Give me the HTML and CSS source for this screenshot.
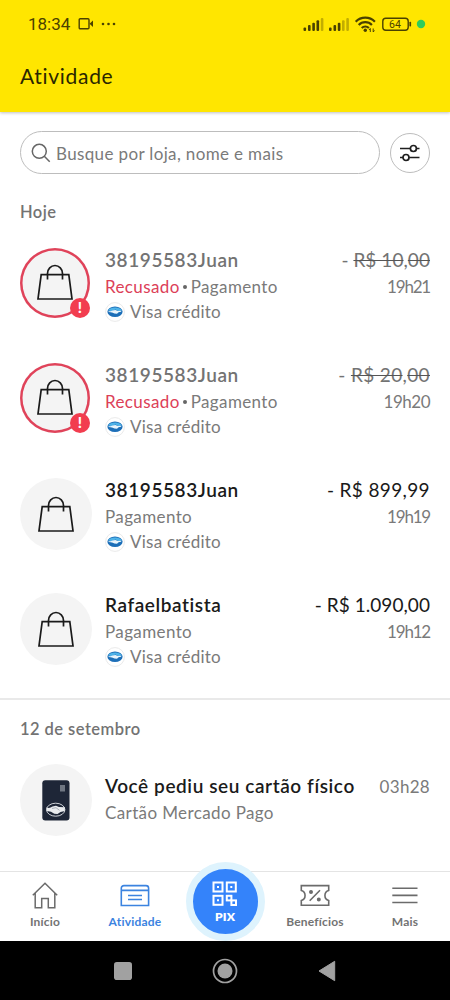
FILE: index.html
```html
<!DOCTYPE html>
<html lang="pt-BR">
<head>
<meta charset="utf-8">
<meta name="viewport" content="width=device-width, initial-scale=1">
<title>Atividade</title>
<link rel="stylesheet" href="styles.css">
</head>
<body>
<svg class="defs" width="0" height="0" aria-hidden="true">
  <symbol id="bag" viewBox="0 0 38 40">
    <path d="M5.2 12.6H32.800L36 37H2Z M11.500 17.500V11.500a7.500 8 0 0 1 15 0V17.500" fill="none" stroke="#1a1a1a" stroke-width="1.700"/>
  </symbol>
  <symbol id="handshake" viewBox="0 0 20 20">
    <circle cx="10" cy="10" r="9.400" fill="#fff" stroke="#e3e3e3" stroke-width=".8"/>
    <ellipse cx="10" cy="9.700" rx="7.600" ry="5.200" fill="#1d6fb8"/>
    <path d="M3.200 8.200C5 5 14.500 4.500 16.800 8.200L14 9.200 10.500 7.600 6.500 9.200Z" fill="#4fb3e8"/>
    <path d="M3.400 8.800C5 9.700 6 9.400 7.500 8.500L10.300 7.900 13 9 16.600 8.700 16 9.700 13.600 10.300 12 11.700 9.500 11.600 7 10.500 3.800 10Z" fill="#e9f5fc"/>
  </symbol>
</svg>
<header class="header">
  <div class="status">
    <span class="clock">18:34</span>
    <svg class="camera" width="16" height="14" viewBox="0 0 16 14"><rect x="1.200" y="1.700" width="9.800" height="10" rx="1" fill="none" stroke="#4a4100" stroke-width="1.400"/><path d="M11.500 6.700 15 3.500V10Z" fill="#4a4100"/></svg>
    <svg class="dots" width="16" height="4" viewBox="0 0 16 4" fill="#4a4100"><circle cx="2" cy="2" r="1.300"/><circle cx="7.500" cy="2" r="1.300"/><circle cx="13" cy="2" r="1.300"/></svg>
    <svg class="signals" width="126" height="20" viewBox="302 14 126 20">
      <g fill="#4a4100"><rect x="303.500" y="27.500" width="2.600" height="3.500" rx="1"/><rect x="308" y="25" width="2.600" height="6" rx="1"/><rect x="312.300" y="22.700" width="2.600" height="8.300" rx="1"/><rect x="316.500" y="20.300" width="2.600" height="10.700" rx="1"/>
      <rect x="329" y="27.500" width="2.600" height="3.500" rx="1"/><rect x="333.500" y="25" width="2.600" height="6" rx="1"/><rect x="337.800" y="22.700" width="2.600" height="8.300" rx="1"/></g>
      <g fill="#c2ad00"><rect x="320.800" y="18" width="2.600" height="13" rx="1"/><rect x="342" y="20.300" width="2.600" height="10.700" rx="1"/><rect x="346.300" y="18" width="2.600" height="13" rx="1"/></g>
      <g fill="none" stroke="#4a4100" stroke-width="2.200"><path d="M355.700 21.700a13.500 13.500 0 0 1 19.200 0M358.700 24.900a9.200 9.200 0 0 1 13.200 0M361.700 28a5.200 5.200 0 0 1 7.200 0"/></g>
      <circle cx="365.300" cy="30.200" r="1.700" fill="#4a4100"/>
      <path d="M370.300 28.500v3.500M369 30l1.300-1.500M373.200 28.500v3.500M373.200 32l1.300-1.500" stroke="#4a4100" stroke-width="1" fill="none"/>
      <rect x="382.800" y="18.200" width="25.400" height="12" rx="3" fill="none" stroke="#4a4100" stroke-width="1.400"/>
      <rect x="409.400" y="21.700" width="1.700" height="4.800" rx=".7" fill="#4a4100"/>
      <text class="battery" x="395" y="28" text-anchor="middle" textLength="12">64</text>
      <circle cx="421" cy="24" r="4.200" fill="#2ecc5a"/>
    </svg>
  </div>
  <h1 class="title">Atividade</h1>
</header>
<main class="content">
  <div class="search-row">
    <div class="search">
      <svg width="20" height="20" viewBox="0 0 20 20" fill="none" stroke="#666" stroke-width="1.500"><circle cx="8.300" cy="8.300" r="7"/><path d="M13.300 13.300 18.700 18.700"/></svg>
      <span class="placeholder">Busque por loja, nome e mais</span>
    </div>
    <div class="filter">
      <svg width="20" height="18" viewBox="0 0 20 18" fill="none" stroke="#1f1f1f" stroke-width="1.700"><path d="M0 4.500H10.300M16.500 4.500H19.500M0 13.500H3M9.200 13.500H19.500"/><circle cx="13.400" cy="4.500" r="3"/><circle cx="6" cy="13.500" r="3"/></svg>
    </div>
  </div>
  <h2 class="day">Hoje</h2>
  <section class="list">
    <article class="item refused">
      <div class="avatar"><svg class="bag"><use href="#bag"/></svg><span class="alert">!</span></div>
      <div class="info">
        <div class="name">38195583Juan</div>
        <div class="kind"><span class="red">Recusado</span><span class="dot"></span>Pagamento</div>
        <div class="method"><svg width="20" height="20"><use href="#handshake"/></svg>Visa crédito</div>
      </div>
      <div class="right"><div class="amount tight">- <s>R$ 10</s>,<s>00</s></div><div class="time ones">19h21</div></div>
    </article>
    <article class="item refused">
      <div class="avatar"><svg class="bag"><use href="#bag"/></svg><span class="alert">!</span></div>
      <div class="info">
        <div class="name">38195583Juan</div>
        <div class="kind"><span class="red">Recusado</span><span class="dot"></span>Pagamento</div>
        <div class="method"><svg width="20" height="20"><use href="#handshake"/></svg>Visa crédito</div>
      </div>
      <div class="right"><div class="amount">- <s>R$ 20</s>,<s>00</s></div><div class="time">19h20</div></div>
    </article>
    <article class="item">
      <div class="avatar"><svg class="bag"><use href="#bag"/></svg></div>
      <div class="info">
        <div class="name">38195583Juan</div>
        <div class="kind">Pagamento</div>
        <div class="method"><svg width="20" height="20"><use href="#handshake"/></svg>Visa crédito</div>
      </div>
      <div class="right"><div class="amount">- R$ 899,99</div><div class="time ones">19h19</div></div>
    </article>
    <article class="item">
      <div class="avatar"><svg class="bag"><use href="#bag"/></svg></div>
      <div class="info">
        <div class="name">Rafaelbatista</div>
        <div class="kind">Pagamento</div>
        <div class="method"><svg width="20" height="20"><use href="#handshake"/></svg>Visa crédito</div>
      </div>
      <div class="right"><div class="amount tight">- R$ 1.090,00</div><div class="time ones">19h12</div></div>
    </article>
  </section>
  <hr class="divider">
  <h2 class="day date">12 de setembro</h2>
  <article class="item card-item">
    <div class="avatar">
      <svg width="28" height="41" viewBox="0 0 28 41"><rect x=".3" y=".3" width="27.200" height="40.300" rx="3" fill="#1e2637"/><rect x="18" y="5" width="5" height="6.500" fill="#6f7682"/><ellipse cx="13.700" cy="29.700" rx="9.200" ry="6.500" fill="#1e2637" stroke="#dfe2e6" stroke-width=".9"/><path d="M4.600 27.500C7 28.300 8.500 27.800 10.500 26.600L14 25.800 17 27 22.900 27.200 22.800 31 18.500 32 15.500 34 12.300 33.800 9 31.800 4.700 31Z" fill="#e9ebee"/><path d="M10 28.500l4-.8 3.500 2.600" stroke="#8d949f" stroke-width=".7" fill="none"/></svg>
    </div>
    <div class="info"><div class="name">Você pediu seu cartão físico</div><div class="kind">Cartão Mercado Pago</div></div>
    <div class="right"><div class="time wide">03h28</div></div>
  </article>
</main>
<nav class="tabs">
  <a class="tab"><svg width="28" height="28" viewBox="0 0 28 28" fill="none" stroke="#6b6b6b" stroke-width="1.500"><path d="M1.800 14.300 14 2.200 26.200 14.300M4.200 12V26.800H10.700V17.500H17.300V26.800H23.800V12"/></svg><span>Início</span></a>
  <a class="tab active"><svg width="30" height="28" viewBox="0 0 30 28" fill="none" stroke="#3b83e0" stroke-width="1.600"><path d="M1.300 24.500V7.200a2.600 2.600 0 0 1 2.600-2.600H26a2.600 2.600 0 0 1 2.600 2.600V24.500ZM1.300 9.400H28.600M8 14.500H22M8 18.500H22"/></svg><span>Atividade</span></a>
  <a class="tab pix">
    <span class="pix-btn">
      <svg width="26" height="26" viewBox="0 0 26 26" fill="none" stroke="#fff" stroke-width="2"><rect x="1.500" y="1.500" width="9" height="9"/><rect x="14.800" y="1.500" width="9" height="9"/><rect x="1.500" y="14.800" width="9" height="9"/><rect x="14.800" y="14.800" width="4.600" height="4.600"/><rect x="19.400" y="19.400" width="4.600" height="4.600"/><path d="M5 6h2M18.300 6h2M5 19.300h2"/></svg>
      <span class="lb-pix">PIX</span>
    </span>
  </a>
  <a class="tab"><svg width="30" height="28" viewBox="0 0 30 28" fill="none" stroke="#6b6b6b" stroke-width="1.600"><path d="M1.300 4.600H28.700V9.500a5.200 5.200 0 0 0 0 10V24.300H1.300V19.500a5.200 5.200 0 0 0 0-10ZM9.700 19.800 20 9.300"/><circle cx="11" cy="11" r="1.200" fill="#6b6b6b"/><circle cx="18.800" cy="18.400" r="1.200" fill="#6b6b6b"/></svg><span>Benefícios</span></a>
  <a class="tab"><svg width="26" height="28" viewBox="0 0 26 28" stroke="#6b6b6b" stroke-width="1.600"><path d="M.3 7.300H25.500M.3 14.400H25.500M.3 21.500H25.500"/></svg><span>Mais</span></a>
</nav>
<footer class="system">
  <svg width="18" height="20" viewBox="0 0 18 20"><rect y="1" width="18" height="18" rx="2.800" fill="#a1a1a1"/></svg>
  <svg width="26" height="26" viewBox="0 0 26 26"><circle cx="13" cy="13" r="11.500" fill="none" stroke="#a1a1a1" stroke-width="1.700"/><circle cx="13" cy="13" r="7.500" fill="#a1a1a1"/></svg>
  <svg width="18" height="22" viewBox="0 0 18 22"><path d="M1 11 16.700 1.300V20.700Z" fill="#a1a1a1" stroke="#a1a1a1" stroke-linejoin="round"/></svg>
</footer>
</body>
</html>
```

FILE: styles.css
```css
* { box-sizing: border-box; }
body { margin: 0; width: 450px; height: 1000px; overflow: hidden; display: flex; flex-direction: column; background: #fff; color: #1a1a1a; font-family: Lato, "Open Sans", sans-serif; font-variant-ligatures: none; }
.defs { display: none; }
.header { flex: none; height: 112px; background: #ffe600; box-shadow: 0 1px 3px rgba(0,0,0,.25); }
.status { display: flex; align-items: center; height: 48px; padding: 0 23px 0 28px; }
.clock { font: 400 17px/20px Roboto, sans-serif; color: #4a4100; width: 50px; }
.camera { margin-right: 7px; }
.signals { margin-left: auto; margin-right: -1px; }
.battery { font: 400 10.500px Roboto, sans-serif; fill: #4a4100; }
.title { margin: 14px 0 0 20px; font-size: 21px; line-height: 28px; font-weight: 400; letter-spacing: .7px; color: #2a2600; }
.content { flex: none; height: 759px; }
.search-row { display: flex; align-items: center; gap: 10px; padding: 19px 20px 0; }
.search { display: flex; align-items: center; width: 360px; height: 43px; padding-left: 10px; border: 1px solid #bdbdbd; border-radius: 22px; }
.placeholder { margin: 1px 0 0 5px; font-size: 17px; letter-spacing: .36px; color: #7a7a7a; white-space: nowrap; }
.filter { display: flex; align-items: center; justify-content: center; width: 40px; height: 40px; border: 1px solid #bdbdbd; border-radius: 50%; }
.day { margin: 26px 20px 0; height: 24px; font-size: 16.500px; line-height: 24px; font-weight: 600; letter-spacing: .45px; color: #737373; }
.list { padding-top: 23px; }
.item { display: flex; height: 115px; padding: 0 20px; }
.avatar { position: relative; flex: none; display: flex; align-items: center; justify-content: center; width: 72px; height: 72px; margin-top: 1px; border-radius: 50%; background: #f4f4f4; }
.bag { width: 38px; height: 40px; }
.refused .avatar { width: 70px; height: 70px; margin-right: 2px; box-shadow: inset 0 0 0 2.500px #e0435a; }
.refused .bag { margin-top: -2px; }
.alert { position: absolute; right: 0; bottom: 0; width: 20px; height: 20px; border-radius: 50%; background: #f23d4f; color: #fff; font-size: 15px; line-height: 19px; font-weight: 900; text-align: center; }
.info { flex: 1; margin-left: 13px; white-space: nowrap; }
.name { font-size: 19px; line-height: 25px; font-weight: 600; letter-spacing: .58px; }
.kind { display: flex; align-items: center; height: 27px; padding-top: 2px; font-size: 17px; line-height: 25px; letter-spacing: .38px; color: #7a7a7a; }
.red { color: #dc4058; }
.dot { width: 4px; height: 4px; margin: 1px 4px 0 3px; border-radius: 50%; background: #666; }
.method { display: flex; align-items: center; gap: 5px; height: 25px; font-size: 17px; line-height: 25px; letter-spacing: .25px; color: #7a7a7a; }
.right { display: flex; flex-direction: column; align-items: flex-end; white-space: nowrap; }
.amount { font-size: 19px; line-height: 25px; letter-spacing: .36px; }
.amount.tight { letter-spacing: .05px; }
.time { height: 27px; padding-top: 1px; font-size: 17px; line-height: 27px; letter-spacing: -.5px; color: #7a7a7a; }
.time.ones { letter-spacing: -1.200px; }
.time.wide { letter-spacing: .3px; }
.refused .name, .refused .amount { color: #737373; }
.refused s { text-decoration: line-through #555 1.300px; }
.divider { height: 2px; margin: -9px 0 0; border: 0; background: #e9e9e9; }
.date { margin-top: 17px; }
.card-item { padding-top: 22px; }
.card-item .info { padding-top: 10px; }
.card-item .right { padding-top: 9px; }
.tabs { flex: none; display: flex; height: 70px; border-top: 1px solid #e4e4e4; background: #fff; }
.tab { width: 90px; display: flex; flex-direction: column; align-items: center; padding-top: 9px; font-size: 12px; line-height: 16px; font-weight: 700; letter-spacing: .2px; color: #737373; }
.tab > span { margin-top: 5px; }
.active { color: #3b83e0; }
.pix { padding-top: 0; }
.tab > .pix-btn { display: flex; flex-direction: column; align-items: center; width: 79px; height: 79px; margin-top: -10px; padding-top: 12px; border: 7px solid #def3fd; border-radius: 50%; background: #3483fa; color: #fff; flex: none; }
.lb-pix { font-weight: 800; line-height: 19px; }
.system { flex: none; height: 59px; display: flex; align-items: center; justify-content: center; gap: 80px; background: #000; }
```
